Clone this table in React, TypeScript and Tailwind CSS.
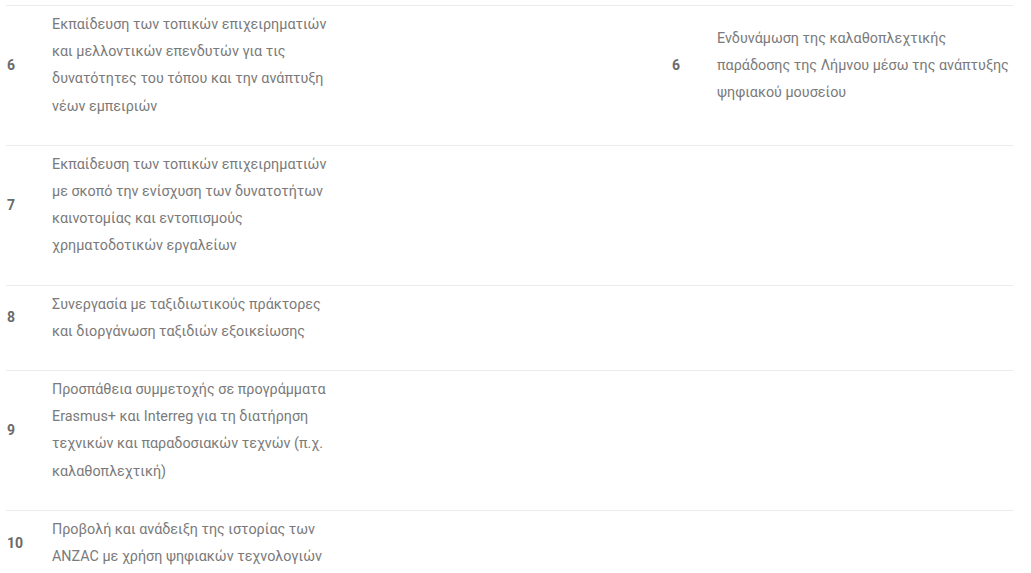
import React from "react";

type Row = { n: string; text: string[]; rn?: string; rtext?: string[] };

const rows: Row[] = [
  {
    n: "6",
    text: [
      "Εκπαίδευση των τοπικών επιχειρηματιών",
      "και μελλοντικών επενδυτών για τις",
      "δυνατότητες του τόπου και την ανάπτυξη",
      "νέων εμπειριών",
    ],
    rn: "6",
    rtext: [
      "Ενδυνάμωση της καλαθοπλεχτικής",
      "παράδοσης της Λήμνου μέσω της ανάπτυξης",
      "ψηφιακού μουσείου",
    ],
  },
  {
    n: "7",
    text: [
      "Εκπαίδευση των τοπικών επιχειρηματιών",
      "με σκοπό την ενίσχυση των δυνατοτήτων",
      "καινοτομίας και εντοπισμούς",
      "χρηματοδοτικών εργαλείων",
    ],
  },
  {
    n: "8",
    text: ["Συνεργασία με ταξιδιωτικούς πράκτορες", "και διοργάνωση ταξιδιών εξοικείωσης"],
  },
  {
    n: "9",
    text: [
      "Προσπάθεια συμμετοχής σε προγράμματα",
      "Erasmus+ και Interreg για τη διατήρηση",
      "τεχνικών και παραδοσιακών τεχνών (π.χ.",
      "καλαθοπλεχτική)",
    ],
  },
  {
    n: "10",
    text: ["Προβολή και ανάδειξη της ιστορίας των", "ANZAC με χρήση ψηφιακών τεχνολογιών"],
  },
];

function Lines({ lines }: { lines: string[] }) {
  return (
    <div className="text-[14.35px] leading-[27.2px] text-[#7a7a7a]">
      {lines.map((l, i) => (
        <div key={i} className="whitespace-nowrap">
          {l}
        </div>
      ))}
    </div>
  );
}

export default function App() {
  return (
    <div
      className="bg-white w-[1031px] h-[573px] overflow-hidden pt-[5px] pl-[6px]"
      style={{ fontFamily: "Roboto, 'Noto Sans', sans-serif" }}
    >
      <div className="w-[1007px]">
        {rows.map((r, i) => (
          <div
            key={i}
            className="grid grid-cols-[46px_293px_1fr_47px_296px] items-center border-t border-[#ebebeb] pt-[5px] pb-[25px]"
          >
            <div className="pl-[1px] text-[14px] font-bold text-[#6b6b6b]">{r.n}</div>
            <Lines lines={r.text} />
            <div />
            <div className="pl-[2px] text-[14px] font-bold text-[#6b6b6b]">{r.rn ?? ""}</div>
            {r.rtext ? <Lines lines={r.rtext} /> : <div />}
          </div>
        ))}
      </div>
    </div>
  );
}
